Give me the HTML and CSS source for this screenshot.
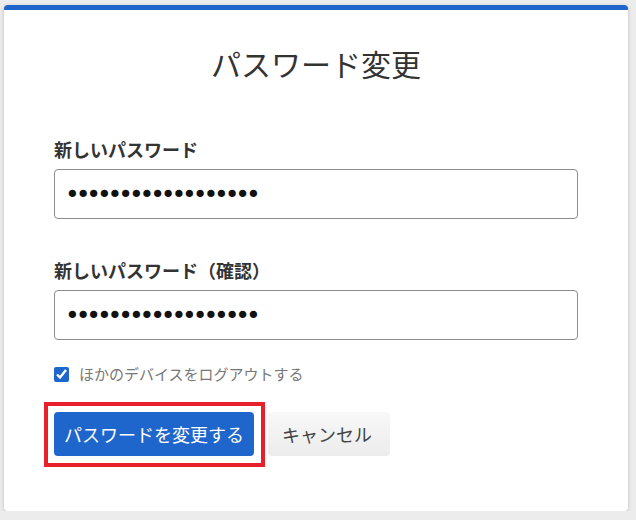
FILE: index.html
```html
<!DOCTYPE html>
<html lang="ja">
<head>
<meta charset="utf-8">
<title>パスワード変更</title>
<link rel="stylesheet" href="styles.css">
</head>
<body>
<div class="card">
  <h1 class="title">パスワード変更</h1>
  <form class="form">
    <div class="field">
      <label class="label" for="pw1">新しいパスワード</label>
      <input class="input" id="pw1" type="password" value="abcdefghijklmnopqr">
    </div>
    <div class="field">
      <label class="label" for="pw2">新しいパスワード（確認）</label>
      <input class="input" id="pw2" type="password" value="abcdefghijklmnopqr">
    </div>
    <label class="check">
      <input class="checkbox" type="checkbox" checked>
      <span class="check-text">ほかのデバイスをログアウトする</span>
    </label>
    <div class="actions">
      <button type="button" class="btn btn-primary">パスワードを変更する</button>
      <button type="button" class="btn btn-cancel">キャンセル</button>
    </div>
  </form>
</div>
</body>
</html>
```

FILE: styles.css
```css
html, body {
  margin: 0;
  padding: 0;
}
body {
  background: #ececec;
  font-family: "Noto Sans CJK JP", "Noto Sans", sans-serif;
  color: #333;
  padding: 5px 8px 0 4px;
}
.card {
  background: #fff;
  border-top: 5px solid #1f66cc;
  border-radius: 4px;
  box-shadow: 0 1px 4px rgba(0, 0, 0, 0.18);
  padding: 0 50px 55px 50px;
}
.title {
  margin: 33px 0 0 0;
  font-size: 30px;
  line-height: 40px;
  font-weight: 400;
  text-align: center;
  color: #333;
}
.form {
  display: flex;
  flex-direction: column;
  margin-top: 54px;
}
.field {
  display: flex;
  flex-direction: column;
  gap: 8px;
  margin-bottom: 39px;
}
.field + .field {
  margin-bottom: 0;
}
.label {
  font-size: 18px;
  line-height: 24px;
  font-weight: 700;
  color: #333;
}
.input {
  box-sizing: border-box;
  height: 50px;
  width: 100%;
  border: 1px solid #8c8c8c;
  border-radius: 4px;
  padding: 0 10px;
  font-size: 25px;
  letter-spacing: -4.1px;
  font-family: "DejaVu Sans", sans-serif;
  color: #111;
  outline: none;
}
.check {
  display: flex;
  align-items: center;
  gap: 10px;
  margin-top: 24px;
  height: 20px;
}
.checkbox {
  margin: 0;
  width: 15px;
  height: 15px;
  accent-color: #1f66cc;
}
.check-text {
  font-size: 15px;
  line-height: 20px;
  color: #777;
}
.actions {
  display: flex;
  gap: 14px;
  margin-top: 28px;
}
.btn {
  height: 44px;
  border-radius: 4px;
  font-family: "Noto Sans CJK JP", sans-serif;
  font-size: 18px;
  border: none;
  cursor: pointer;
}
.btn-primary {
  position: relative;
  background: #1f66cc;
  color: #fff;
  padding: 0 10px;
}
.btn-primary::after {
  content: "";
  position: absolute;
  top: -10px;
  left: -10px;
  right: -11px;
  bottom: -11px;
  border: 4px solid #e8202a;
  pointer-events: none;
}
.btn-cancel {
  background: linear-gradient(#f8f8f8, #ececec);
  color: #444;
  padding: 0 18px 0 14px;
}
```
